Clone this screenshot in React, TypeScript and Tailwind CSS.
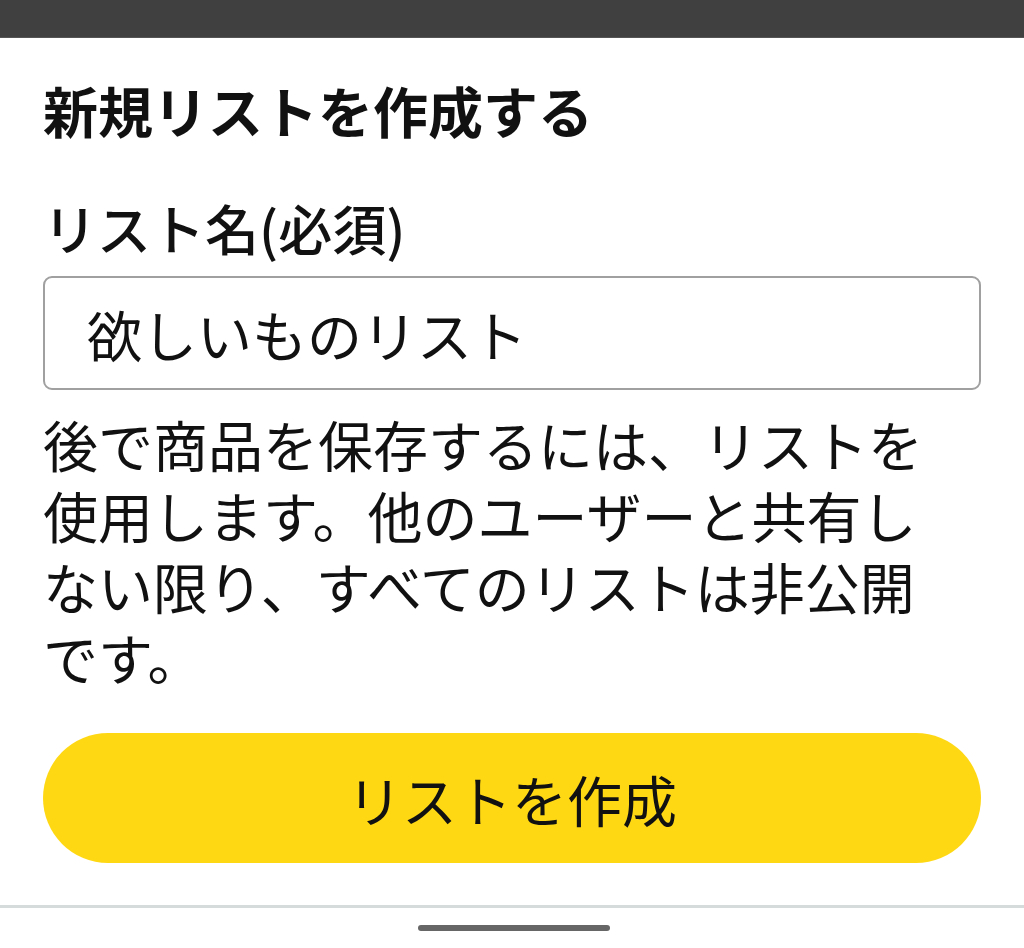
import React, { useState } from 'react';

const font = { fontFamily: '"Noto Sans CJK JP", "Noto Sans", sans-serif' };

const App: React.FC = () => {
  const [name, setName] = useState('欲しいものリスト');

  return (
    <div className="flex flex-col w-full h-[948px] bg-white text-[#111111] overflow-hidden" style={font}>
      {/* status bar */}
      <div className="h-[38px] shrink-0 bg-[#404040] border-b border-[#555555]" />

      <div className="flex flex-col px-[43px] pt-[36px]">
        <h1 className="text-[55px] leading-[71px] font-bold">新規リストを作成する</h1>

        <label className="mt-[47px] text-[54px] leading-[71px] font-medium">リスト名(必須)</label>

        <input
          type="text"
          value={name}
          onChange={(e) => setName(e.target.value)}
          className="mt-[13px] h-[114px] w-full rounded-[9px] border-2 border-[#a0a0a0] px-[42px] text-[55px] text-[#111111] focus:outline-none"
          style={font}
        />

        <p className="mt-[18px] w-[900px] text-[55px] leading-[71px]">
          後で商品を保存するには、リストを使用します。他のユーザーと共有しない限り、すべてのリストは非公開です。
        </p>

        <button className="mt-[41px] h-[130px] w-full rounded-full bg-[#FFD814] text-[55px] text-[#111111]" style={font}>
          リストを作成
        </button>
      </div>

      <div className="flex-1" />

      {/* navigation */}
      <div className="shrink-0 border-t-[3px] border-[#d5dbdb] h-[43px] flex justify-center pt-[17px] pl-[4px]">
        <div className="w-[192px] h-[6px] rounded-full bg-[#666666]" />
      </div>
    </div>
  );
};

export default App;
